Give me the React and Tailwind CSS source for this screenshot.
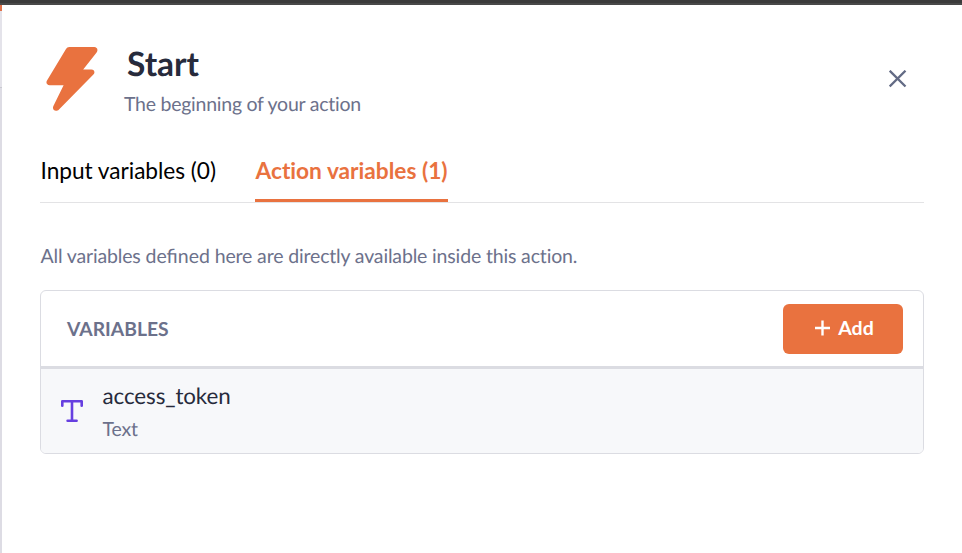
function BoltIcon() {
  return (
    <svg viewBox="0 0 52 65" className="h-[65px] w-[52px] shrink-0" fill="#e9723f" aria-hidden="true">
      <path d="M23.3 0H48.2C51.2 0 52.4 3 50.6 5.4L37.2 22.6H45.4C48.4 22.6 49.4 25.6 47.4 27.6L13 62.4C9.8 65.6 5.6 62.8 7.4 59L17.6 38.2H3.7C.9 38.2-.4 35.6 1 33.4L20 2C20.8.7 21.8 0 23.3 0Z" />
    </svg>
  );
}

function CloseIcon() {
  return (
    <svg viewBox="0 0 18 18" className="size-[18px]" fill="none" stroke="#636b85" strokeWidth="2.3" aria-hidden="true">
      <path d="M.7 .7L16.5 16.5M16.5 .7L.7 16.5" />
    </svg>
  );
}

function PlusIcon() {
  return (
    <svg viewBox="0 0 16 16" className="size-4" fill="none" stroke="currentColor" strokeWidth="2.4" aria-hidden="true">
      <path d="M8.5 .5V15.5M1 8H16" />
    </svg>
  );
}

function TextTypeIcon() {
  return (
    <svg viewBox="0 0 22 22" className="size-[22px] shrink-0" fill="none" stroke="#663fe0" strokeWidth="2.6" strokeLinecap="round" strokeLinejoin="round" aria-hidden="true">
      <path d="M1.3 5.7V1.3H20.7V5.7M11 1.3V20.7M6.6 20.7H15.6" />
    </svg>
  );
}

export default function App() {
  return (
    <div className="flex h-[553px] w-[962px] flex-col overflow-hidden bg-white font-['Lato',sans-serif] [font-variant-ligatures:none] [text-rendering:geometricPrecision]">
      <div className="h-[5px] shrink-0 border-b-2 border-[#494949] bg-[#3b3b3b]" />
      <div className="flex flex-1">
        <div className="flex w-[2px] shrink-0 flex-col bg-[#dddce4]">
          <div className="h-[6px] bg-[#e1724a]" />
          <div className="h-[77px] border-b border-[#c9c9d0] bg-[#e4e3ea]" />
        </div>

        <main className="flex flex-1 flex-col pr-[38px] pl-[38px]">
          <header className="flex h-[136px] pt-[42px] pr-[17px] pl-[6px]">
            <BoltIcon />
            <div className="ml-[26px] flex-1">
              <h1 className="ml-[3px] -mt-[2px] text-[33.5px] leading-[38px] font-bold text-[#272b3c]">Start</h1>
              <p className="mt-[10px] text-[19.5px] leading-6 tracking-[-0.25px] text-[#6c718b]">
                The beginning of your action
              </p>
            </div>
            <button className="mt-[23px] size-[18px]" aria-label="Close">
              <CloseIcon />
            </button>
          </header>

          <nav className="flex h-[62px] gap-[39px] border-b border-[#e3e3e5] text-[22.7px] leading-7">
            <button className="flex w-[176px] pt-[16px] pl-[0.5px] tracking-[-0.04px] whitespace-nowrap text-black">Input variables (0)</button>
            <button className="flex w-[193px] border-b-[3px] border-[#e9723f] pt-[16px] pl-[0.5px] font-bold whitespace-nowrap text-[#e9723f]">
              Action variables (1)
            </button>
          </nav>

          <p className="mt-[42px] pl-[0.5px] text-[19.5px] leading-6 tracking-[-0.155px] text-[#6c718b]">
            All variables <span className="tracking-normal [font-variant-ligatures:normal]">defined</span> here are directly available inside this action.
          </p>

          <section className="mt-[21px] flex h-[164px] flex-col overflow-hidden rounded-[6px] border border-[#dbdce2]">
            <div className="flex h-[78px] shrink-0 items-center justify-between border-b-[3px] border-[#dbdce2] pr-5 pl-[26px]">
              <h2 className="pt-[2px] text-[19.3px] leading-6 font-bold text-[#6c718b]">VARIABLES</h2>
              <button className="flex h-[50px] w-[120px] items-center justify-center gap-2 rounded-[6px] bg-[#e9723f] pb-[1px] pl-[2px] text-[19.5px] leading-6 font-bold text-white">
                <PlusIcon />
                Add
              </button>
            </div>
            <div className="flex flex-1 bg-[#f7f8fa] pl-5">
              <div className="pt-[31px]">
                <TextTypeIcon />
              </div>
              <div className="ml-[19px] pt-[13px] pl-[0.5px]">
                <div className="text-[22.4px] leading-7 tracking-[-0.1px] text-[#272b3c]">access_token</div>
                <div className="mt-[8px] text-[19.5px] leading-6 tracking-[-0.15px] text-[#6c718b]">Text</div>
              </div>
            </div>
          </section>
        </main>
      </div>
    </div>
  );
}
